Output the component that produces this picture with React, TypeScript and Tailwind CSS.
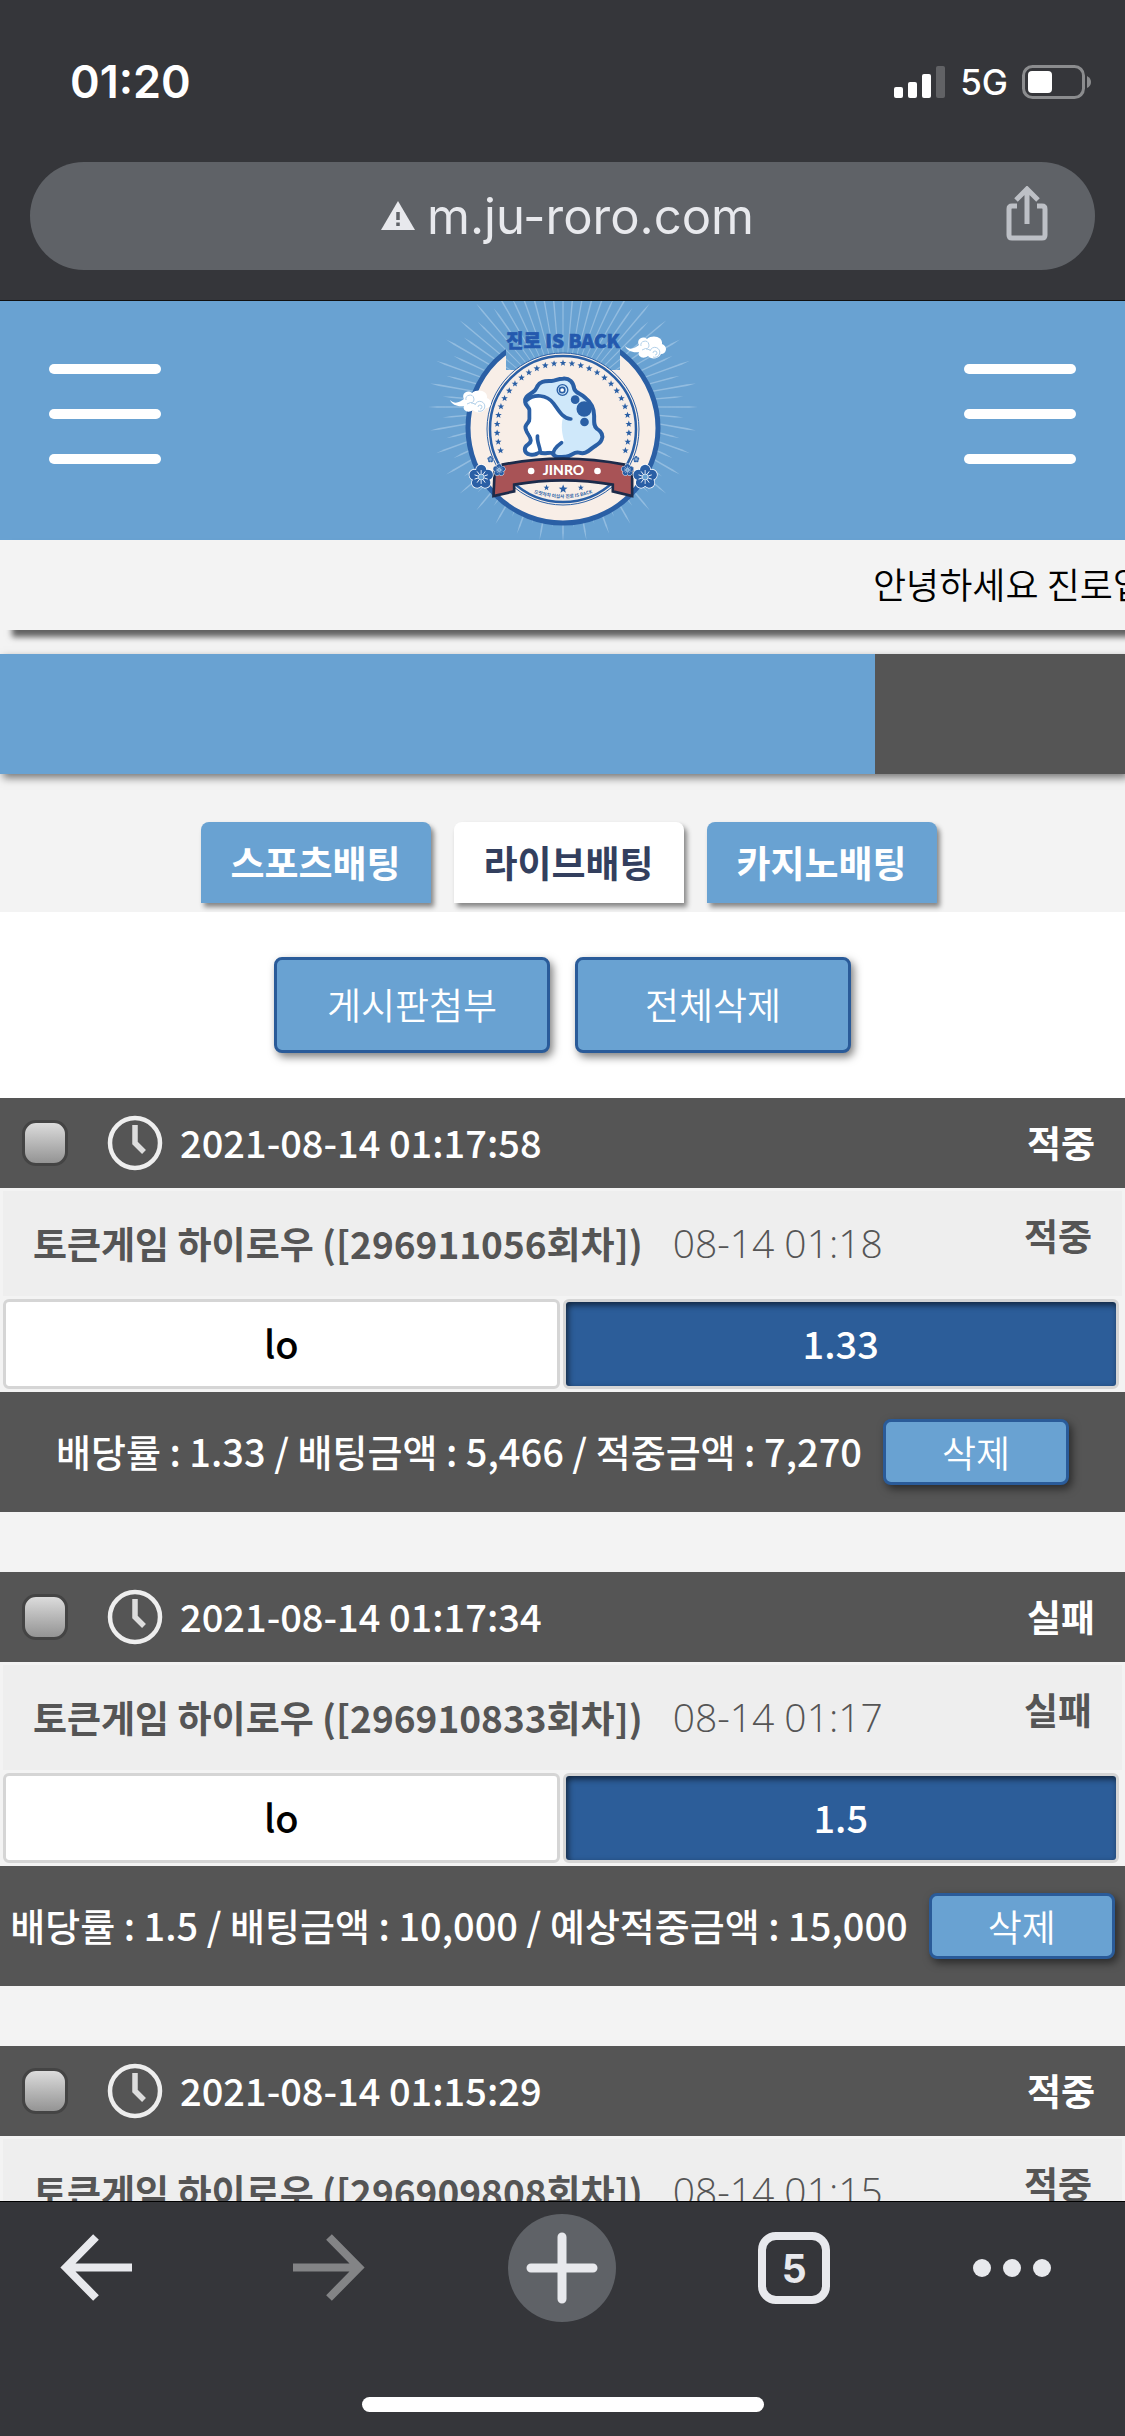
const bets = [
  { id: 1, time: '2021-08-14 01:17:58', result: '적중', round: '296911056', played: '08-14 01:18', pick: 'lo', odds: '1.33', summary: '배당률 : 1.33 / 배팅금액 : 5,466 / 적중금액 : 7,270' },
  { id: 2, time: '2021-08-14 01:17:34', result: '실패', round: '296910833', played: '08-14 01:17', pick: 'lo', odds: '1.5', summary: '배당률 : 1.5 / 배팅금액 : 10,000 / 예상적중금액 : 15,000' },
  { id: 3, time: '2021-08-14 01:15:29', result: '적중', round: '296909808', played: '08-14 01:15', pick: 'lo', odds: '1.33', summary: '배당률 : 1.33 / 배팅금액 : 5,466 / 적중금액 : 7,270' },
];

const rays = Array.from({ length: 72 }, (_, i) => i * 5);
const innerStars = Array.from({ length: 29 }, (_, i) => -109 + i * (218 / 28));

const STAR = 'M0 -3.4 L0.9 -1.1 L3.3 -1 L1.4 0.5 L2 2.8 L0 1.5 L-2 2.8 L-1.4 0.5 L-3.3 -1 L-0.9 -1.1 Z';
const RAY_LONG = 'M-0.4 -50 L-0.8 -126 L0 -135 L0.8 -126 L0.4 -50 Z';
const RAY_SHORT = 'M-0.4 -50 L-0.8 -112 L0 -121 L0.8 -112 L0.4 -50 Z';

function StatusBar() {
  return (
    <div className="flex h-[162px] items-start justify-between pl-[70px] pr-[33px] pt-[54px] text-white">
      <span className="text-[45px] font-semibold leading-[56px]">01:20</span>
      <div className="flex h-14 items-center gap-[14px]">
        <svg width="52" height="34" viewBox="0 0 52 34" fill="#fff">
          <rect x="0" y="22" width="9" height="11" rx="2" />
          <rect x="14" y="17" width="9" height="16" rx="2" />
          <rect x="28" y="9" width="9" height="24" rx="2" />
          <rect x="42" y="1" width="9" height="32" rx="2" fill="#616265" />
        </svg>
        <span className="text-[35px] font-medium">5G</span>
        <svg width="70" height="36" viewBox="0 0 70 36" fill="none">
          <rect x="1.5" y="2.5" width="60" height="31" rx="9" stroke="#8b8c8e" strokeWidth="3" />
          <rect x="6" y="7" width="24" height="22" rx="4" fill="#fff" />
          <path d="M65 12 Q69 14 69 18 Q69 22 65 24 Z" fill="#8b8c8e" />
        </svg>
      </div>
    </div>
  );
}

function AddressBar() {
  return (
    <div className="mx-[30px] mb-[30px] flex h-27 items-center rounded-full bg-[#5f6267] pl-12 pr-[46px]">
      <div className="w-13" />
      <div className="flex flex-1 items-center justify-center gap-3">
        <svg width="34" height="30" viewBox="0 0 34 30">
          <path d="M17 0 L34 29 H0 Z" fill="#e8e9ed" />
          <path d="M17 11 V19 M17 21.5 V25" stroke="#5f6267" strokeWidth="3.5" />
        </svg>
        <span className="text-[49px] leading-none text-[#e8e9ed]">m.ju-roro.com</span>
      </div>
      <button type="button" aria-label="공유" className="pb-1">
        <svg width="44" height="56" viewBox="0 0 44 56" fill="none" stroke="#bdc0c6" strokeWidth="5">
          <path d="M12 20 H7 Q4 20 4 23 V49 Q4 52 7 52 H37 Q40 52 40 49 V23 Q40 20 37 20 H32" />
          <path d="M22 38 V4 M11 14 L22 3 L33 14" />
        </svg>
      </button>
    </div>
  );
}

function MenuButton({ label }: { label: string }) {
  return (
    <button type="button" aria-label={label} className="mt-[63px] flex w-28 flex-col gap-[35px]">
      <span className="h-2.5 w-full rounded-full bg-white" />
      <span className="h-2.5 w-full rounded-full bg-white" />
      <span className="h-2.5 w-full rounded-full bg-white" />
    </button>
  );
}

function Flower({ x, y, scale }: { x: number; y: number; scale: number }) {
  return (
    <g transform={`translate(${x} ${y}) scale(${scale})`}>
      {[0, 72, 144, 216, 288].map((a) => (
        <circle key={a} cy="-7.5" r="6.3" fill="#fff" transform={`rotate(${a})`} />
      ))}
      {[0, 72, 144, 216, 288].map((a) => (
        <circle key={a} cy="-7.5" r="5.5" fill="#2a5fa5" transform={`rotate(${a})`} />
      ))}
      <circle r="6" fill="#2a5fa5" />
      <circle r="3.2" fill="#69a2d2" stroke="#fff" strokeWidth="0.8" />
      {[0, 36, 72, 108, 144, 180, 216, 252, 288, 324].map((a) => (
        <path key={a} d="M0 -4 V-7" stroke="#fff" strokeWidth="0.9" strokeLinecap="round" transform={`rotate(${a})`} />
      ))}
    </g>
  );
}

function Cloud({ x, y }: { x: number; y: number }) {
  return (
    <g transform={`translate(${x} ${y})`}>
      <path d="M0 9 C5 14 10 11 14 8 C11 3 17 -2 22 2 C28 -3 38 0 37 7 C43 9 42 17 36 17 C34 22 26 23 23 19 C18 23 12 19 14 15 C8 16 2 14 0 9 Z" fill="#fff" />
      <path d="M16 9 a4 4 0 1 1 5 3 M17 13 q3 -3 8 0 M25 14 a5 5 0 1 1 3 6 M28 16 a2 2 0 1 1 2 2" fill="none" stroke="#a9cbe7" strokeWidth="0.9" />
    </g>
  );
}

function Toad() {
  return (
    <g transform="translate(57.5 9) scale(0.3333)" strokeLinecap="round" strokeLinejoin="round">
      <path
        d="M119 276 C116 262 128 256 140 248 C152 242 152 236 156 228 C164 212 182 214 198 213 C212 212 216 206 232 206 C252 204 264 216 266 236 C270 250 286 250 300 264 C318 278 326 294 326 318 C326 336 324 348 334 356 C350 366 354 378 348 390 C344 402 330 406 318 416 C304 428 296 432 280 428 C262 424 262 440 240 440 C222 442 208 444 202 430 C190 424 178 436 160 426 C148 440 118 436 118 418 C118 402 134 406 136 392 C138 378 118 366 120 350 C124 338 132 338 132 326 L132 300 C130 290 120 288 119 276 Z"
        fill="#cfe8fa"
        stroke="#2a5fa5"
        strokeWidth="12"
      />
      <path d="M136 268 C160 254 186 262 202 284 C214 302 222 316 232 324 C226 348 230 372 236 392 C220 402 208 412 202 424 C188 418 178 428 164 420 C150 430 126 430 125 418 C126 408 142 408 142 392 C142 378 126 366 127 352 C130 342 138 340 138 326 V298 C136 286 126 278 136 268 Z" fill="#fff" />
      <path d="M122 272 C146 250 184 254 204 280 C220 302 232 326 256 327 M156 378 C154 394 162 408 164 422 M228 398 C214 408 202 418 203 434" fill="none" stroke="#2a5fa5" strokeWidth="11" />
      <circle cx="231" cy="240" r="16" fill="#cfe8fa" stroke="#2a5fa5" strokeWidth="4" />
      <circle cx="230" cy="240" r="8" fill="#fff" stroke="#2a5fa5" strokeWidth="5" />
      <g fill="#2a5fa5">
        <circle cx="269" cy="269" r="13" />
        <circle cx="296" cy="297" r="23" />
        <circle cx="297" cy="336" r="13" />
      </g>
    </g>
  );
}

function Ribbon() {
  return (
    <g transform="translate(27.5 139) scale(0.3333)">
      <path d="M140 74 Q323 38 508 74 L530 84 V168 L472 154 V134 Q323 108 176 134 V154 L114 168 L118 84 Z" fill="#a85356" stroke="#1c2b4a" strokeWidth="8" />
      <circle cx="227" cy="93" r="10" fill="#fff" />
      <circle cx="426" cy="93" r="10" fill="#fff" />
      <text x="324" y="104" textAnchor="middle" className="fill-white font-[Lato,sans-serif] text-[42px] font-black">JINRO</text>
      <path d={STAR} fill="#2a5fa5" transform="translate(273 143) scale(2.7)" />
      <path d={STAR} fill="#2a5fa5" transform="translate(323 147) scale(4)" />
      <path d={STAR} fill="#2a5fa5" transform="translate(376 143) scale(2.7)" />
      <path id="motto" d="M212 150 Q323 198 434 150" fill="none" />
      <text textAnchor="middle" className="fill-[#2a5fa5] font-['Noto_Sans_CJK_KR',sans-serif] text-[14px] font-bold">
        <textPath href="#motto" startOffset="50%">으랏차차 이십사 진로 IS BACK</textPath>
      </text>
      <Flower x={105} y={58} scale={0.75} />
      <Flower x={542} y={58} scale={0.75} />
      <Flower x={77} y={111} scale={2.8} />
      <Flower x={569} y={111} scale={2.8} />
      <Flower x={131} y={90} scale={1.4} />
      <Flower x={516} y={90} scale={1.4} />
    </g>
  );
}

// Round badge: sun rays, double ring, toad and ribbon
function Logo() {
  return (
    <svg width="270" height="239" viewBox="0 0 270 239" role="img" aria-label="진로 IS BACK">
      <defs>
        <clipPath id="notch">
          <path d="M0 0 H78 V69 H192 V0 H270 V239 H0 Z" />
        </clipPath>
      </defs>
      {rays.map((a) => (
        <path key={a} d={a % 10 === 0 ? RAY_LONG : RAY_SHORT} fill="#a4c8e6" opacity="0.7" transform={`translate(135 106) rotate(${a})`} />
      ))}
      <circle cx="135" cy="127" r="95" fill="#f8eee7" stroke="#2a5fa5" strokeWidth="5" clipPath="url(#notch)" />
      <circle cx="135" cy="128" r="76" fill="#f8eee7" stroke="#2a5fa5" strokeWidth="1" />
      <circle cx="135" cy="128" r="73" fill="none" stroke="#2a5fa5" strokeWidth="2.5" />
      {innerStars.map((a) => (
        <path key={a} d={STAR} fill="#2a5fa5" transform={`translate(135 128) rotate(${a}) translate(0 -66) rotate(${-a})`} />
      ))}
      <text x="135" y="47" textAnchor="middle" strokeWidth="0.6" className="fill-[#2459ae] stroke-[#2459ae] font-['Noto_Sans_CJK_KR',sans-serif] text-[19px] font-black">진로 IS BACK</text>
      <Toad />
      <Ribbon />
      <Cloud x={22} y={90} />
      <Cloud x={197} y={36} />
    </svg>
  );
}

function Header() {
  return (
    <header className="flex h-[239px] items-start justify-between bg-[#69a2d2] px-[49px]">
      <MenuButton label="메뉴" />
      <Logo />
      <MenuButton label="내 정보" />
    </header>
  );
}

const TAB = 'h-[81px] w-[230px] rounded-t-lg text-[37px] font-bold shadow-[3px_4px_5px_rgba(0,0,0,0.45)]';
const ACTION = 'h-24 w-[276px] rounded-lg border-[3px] border-[#2a5b99] bg-[#69a2d2] text-[37px] font-[350] text-white shadow-[3px_4px_8px_rgba(0,0,0,0.5)]';

function BetCard({ bet }: { bet: (typeof bets)[number] }) {
  return (
    <article className="mb-15 text-[38px]">
      <div className="flex h-[90px] items-center bg-[#555] pl-[22px] pr-[30px] font-medium text-white">
        <input
          type="checkbox"
          aria-label={bet.time}
          className="size-[46px] appearance-none rounded-[14px] border-[3px] border-[#444] bg-linear-to-b from-[#dcdcdc] to-[#949494]"
        />
        <svg className="ml-[39px] mr-[17px]" width="56" height="56" viewBox="0 0 56 56" fill="none" stroke="#eee" strokeWidth="4.5">
          <circle cx="28" cy="28" r="25" />
          <path d="M28 10 V28 L37 37" stroke="#ddd" strokeWidth="5.5" />
        </svg>
        <span className="pb-1">{bet.time}</span>
        <span className="ml-auto text-[37px] font-bold">{bet.result}</span>
      </div>
      <div className="m-[3px] flex h-[105px] items-center bg-[#eee] px-[30px] text-[37px] text-[#555]">
        <b className="font-bold">토큰게임 하이로우 ([{bet.round}회차])</b>
        <span className="ml-[30px] font-['Open_Sans',sans-serif] text-[39px] font-light">{bet.played}</span>
        <span className="mb-4 ml-auto font-bold">{bet.result}</span>
      </div>
      <div className="mb-[3px] ml-[3px] mr-[6px] flex gap-[3px] font-medium">
        <div className="flex h-[90px] flex-1 items-center justify-center rounded-md border-[3px] border-[#d5d5d5] bg-white pb-1 text-black">{bet.pick}</div>
        <div className="flex h-[90px] flex-1 items-center justify-center rounded-md border-[3px] border-[#d5d5d5] bg-[#2c5d99] pb-1 text-white shadow-[inset_2px_3px_6px_rgba(0,0,0,0.6)]">{bet.odds}</div>
      </div>
      <div className="flex h-[120px] items-center justify-center gap-[21px] whitespace-nowrap bg-[#555] font-medium text-white">
        <span className="pb-1">{bet.summary}</span>
        <button type="button" className="h-[66px] w-[186px] shrink-0 rounded-lg border-[3px] border-[#2a5b99] bg-[#69a2d2] text-[37px] leading-none font-[350] shadow-[3px_4px_8px_rgba(0,0,0,0.5)]">삭제</button>
      </div>
    </article>
  );
}

function BrowserToolbar() {
  return (
    <nav className="flex h-[235px] shrink-0 flex-col items-center border-t border-black bg-[#35363a]">
      <div className="flex h-30 w-full items-center justify-between pl-[42px] pr-[38px] pt-3">
        <button type="button" aria-label="뒤로" className="flex w-27 justify-center">
          <svg width="72" height="72" viewBox="0 0 72 72" fill="none" stroke="#e8e9ed" strokeWidth="8">
            <path d="M36 5 L6 35.5 L36 66 M6 35.5 H72" />
          </svg>
        </button>
        <button type="button" aria-label="앞으로" className="flex w-27 justify-center">
          <svg width="72" height="72" viewBox="0 0 72 72" fill="none" stroke="#838486" strokeWidth="8">
            <path d="M36 5 L66 35.5 L36 66 M66 35.5 H0" />
          </svg>
        </button>
        <button type="button" aria-label="새 탭" className="flex size-27 items-center justify-center rounded-full bg-[#5f6267]">
          <svg width="72" height="72" viewBox="0 0 72 72" stroke="#e8e9ed" strokeWidth="9" strokeLinecap="round">
            <path d="M36 5 V67 M5 36 H67" />
          </svg>
        </button>
        <button type="button" aria-label="탭 5개" className="flex w-27 justify-center">
          <span className="flex size-18 items-center justify-center rounded-[18px] border-8 border-[#e8e9ed] text-[39px] leading-none font-bold text-[#e8e9ed]">5</span>
        </button>
        <button type="button" aria-label="더보기" className="flex w-[114px] justify-start">
          <svg width="78" height="18" viewBox="0 0 78 18" fill="#e8e9ed">
            <circle cx="9" cy="9" r="9" />
            <circle cx="39" cy="9" r="9" />
            <circle cx="69" cy="9" r="9" />
          </svg>
        </button>
      </div>
      <div className="mb-6 mt-auto h-[15px] w-[402px] rounded-full bg-white" />
    </nav>
  );
}

export default function App() {
  return (
    <div className="flex h-screen flex-col overflow-hidden bg-[#35363a] font-[Inter,'Noto_Sans_CJK_KR',sans-serif]">
      <StatusBar />
      <AddressBar />
      <main className="min-h-0 flex-1 overflow-hidden border-t border-[#111] bg-[#f3f3f3] font-['Noto_Sans_CJK_KR',sans-serif]">
        <Header />
        <div className="relative flex h-[90px] items-center whitespace-nowrap bg-[#f3f3f3] pb-1 pl-[873px] text-[36px] font-[350] text-black shadow-[12px_7px_6px_rgba(0,0,0,0.6)]">안녕하세요 진로입니다</div>
        <div className="mt-6 flex h-[120px] shadow-[3px_4px_8px_rgba(0,0,0,0.5)]">
          <div className="w-7/9 bg-[#69a2d2]" />
          <div className="flex-1 bg-[#555]" />
        </div>
        <div className="flex justify-center gap-[23px] pb-[9px] pl-3 pt-12">
          <button type="button" className={`${TAB} bg-[#69a2d2] text-white`}>스포츠배팅</button>
          <button type="button" className={`${TAB} bg-white text-[#333f5e]`}>라이브배팅</button>
          <button type="button" className={`${TAB} bg-[#69a2d2] text-white`}>카지노배팅</button>
        </div>
        <div className="flex justify-center gap-[25px] bg-white py-[45px]">
          <button type="button" className={ACTION}>게시판첨부</button>
          <button type="button" className={ACTION}>전체삭제</button>
        </div>
        {bets.map((bet) => (
          <BetCard key={bet.id} bet={bet} />
        ))}
      </main>
      <BrowserToolbar />
    </div>
  );
}
